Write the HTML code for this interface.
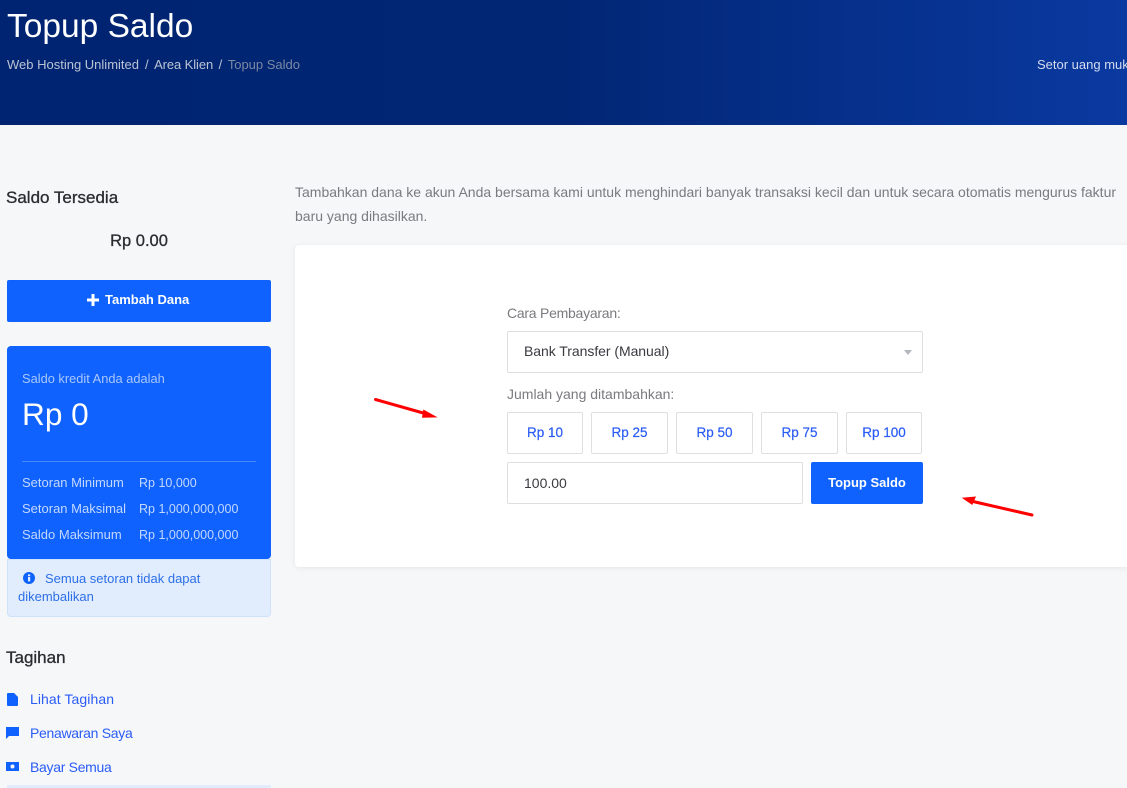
<!DOCTYPE html>
<html><head><meta charset="utf-8"><style>
html,body{margin:0;padding:0}
body{width:1127px;height:788px;overflow:hidden;position:relative;background:#f6f7f9;font-family:"Liberation Sans",sans-serif;font-size:14px;color:#7a7a80}
.a{position:absolute;white-space:nowrap}
.box{position:absolute;box-sizing:border-box;background:#fff;border:1px solid #dfdfe2;border-radius:2px}
.amt{top:412px;height:42px;text-align:center;line-height:40px;color:#2a5cf6;font-size:13.5px;-webkit-text-stroke:.2px #2a5cf6}
.side{left:30px;color:#2a5cf6;font-size:14px}
.h{font-size:17px;line-height:20px;color:#2b2b30;-webkit-text-stroke:.3px #2b2b30}
.l{font-size:13px;line-height:16px;color:#c3d8ff}
.v{font-size:12.5px;line-height:16px;color:#c3d8ff;left:139px}
</style></head><body>
<div class="a" style="left:0;top:0;width:1127px;height:125px;background:linear-gradient(90deg,#002471 0%,#012674 50%,#0a39a0 100%)"></div>
<div class="a" style="left:7px;top:7px;font-size:33.5px;line-height:40px;color:#fff">Topup Saldo</div>
<div class="a" style="left:7px;top:57px;line-height:16px;font-size:13px;color:#bcc3d4">Web Hosting Unlimited<span style="margin:0 5.500px 0 6px">/</span><span style="letter-spacing:-.1px">Area Klien</span><span style="margin:0 5.500px">/</span><span style="color:#7c88a4">Topup Saldo</span></div>
<div class="a" style="left:1037px;top:57px;line-height:16px;font-size:13px;color:#d5dcf0">Setor uang muka</div>

<div class="a h" style="left:6px;top:188px">Saldo Tersedia</div>
<div class="a" style="left:7px;width:264px;top:231px;text-align:center;font-size:16.5px;line-height:20px;color:#2b2b30;-webkit-text-stroke:.3px #2b2b30">Rp 0.00</div>
<div class="a" style="left:7px;top:280px;width:264px;height:42px;background:#0f62fe;border-radius:2px"></div>
<svg class="a" style="left:87px;top:294px" width="12" height="12" viewBox="0 0 12 12"><path d="M4.500 0h3v4.500H12v3H7.500V12h-3V7.500H0v-3h4.500z" fill="#fff"/></svg>
<div class="a" style="left:105px;top:292px;color:#fff;font-weight:bold;font-size:13px;line-height:16px">Tambah Dana</div>

<div class="a" style="left:7px;top:559px;width:264px;height:58px;box-sizing:border-box;background:#e1edfd;border:1px solid #cfe2fb;border-radius:0 0 4px 4px"></div>
<div class="a" style="left:7px;top:346px;width:264px;height:213px;background:#0f62fe;border-radius:4px"></div>
<div class="a" style="left:22px;top:371px;font-size:12.85px;line-height:16px;color:#a9c6fe">Saldo kredit Anda adalah</div>
<div class="a" style="left:22px;top:394px;font-size:31.6px;line-height:40px;color:#fff">Rp 0</div>
<div class="a" style="left:22px;top:461px;width:234px;height:1px;background:#4a88fe"></div>
<div class="a l" style="left:22px;top:475px">Setoran Minimum</div>
<div class="a v" style="top:475px">Rp 10,000</div>
<div class="a l" style="left:22px;top:501px">Setoran Maksimal</div>
<div class="a v" style="top:501px">Rp 1,000,000,000</div>
<div class="a l" style="left:22px;top:527px">Saldo Maksimum</div>
<div class="a v" style="top:527px">Rp 1,000,000,000</div>
<svg class="a" style="left:23px;top:572px" width="12" height="12" viewBox="0 0 12 12"><circle cx="6" cy="6" r="6" fill="#0f62fe"/><rect x="5" y="5" width="2.2" height="4.400" fill="#e1edfd"/><rect x="5" y="2.400" width="2.2" height="1.800" fill="#e1edfd"/></svg>
<div class="a" style="left:45px;top:570px;font-size:13px;line-height:18px;color:#2c6fe8">Semua setoran tidak dapat</div>
<div class="a" style="left:18px;top:588px;font-size:13px;line-height:18px;color:#2c6fe8">dikembalikan</div>

<div class="a h" style="left:6px;top:648px">Tagihan</div>
<svg class="a" style="left:7px;top:693px" width="12" height="13" viewBox="0 0 12 13"><path d="M0 1a1 1 0 0 1 1-1h6l4 4v8a1 1 0 0 1-1 1H1a1 1 0 0 1-1-1z" fill="#0f62fe"/></svg>
<div class="a side" style="top:691px;line-height:16px;letter-spacing:.08px">Lihat Tagihan</div>
<svg class="a" style="left:6px;top:727px" width="13" height="12" viewBox="0 0 13 12"><path d="M0 0h13v9H3l-3 3z" fill="#0f62fe"/></svg>
<div class="a side" style="top:725px;line-height:16px;letter-spacing:-.3px">Penawaran Saya</div>
<svg class="a" style="left:6px;top:762px" width="13" height="9" viewBox="0 0 13 9"><path fill-rule="evenodd" d="M0 0h13v9H0zM6.500 2.500a2 2 0 1 0 0 4 2 2 0 0 0 0-4z" fill="#0f62fe"/></svg>
<div class="a side" style="top:759px;line-height:16px;letter-spacing:-.3px">Bayar Semua</div>
<div class="a" style="left:7px;top:785px;width:264px;height:3px;background:#e1edfd"></div>

<div class="a" style="left:295px;top:184px;font-size:14px;line-height:16px">Tambahkan dana ke akun Anda bersama kami untuk menghindari banyak transaksi kecil dan untuk secara otomatis mengurus faktur</div>
<div class="a" style="left:295px;top:208px;font-size:14px;line-height:16px">baru yang dihasilkan.</div>
<div class="a" style="left:295px;top:245px;width:840px;height:322px;background:#fff;border-radius:4px;box-shadow:0 1px 6px rgba(30,40,70,.08)"></div>

<div class="a" style="left:507px;top:305px;font-size:14px;line-height:16px;letter-spacing:-.25px">Cara Pembayaran:</div>
<div class="box" style="left:507px;top:331px;width:416px;height:42px"></div>
<div class="a" style="left:524px;top:343px;font-size:14px;line-height:16px;color:#3a3a40;letter-spacing:-.05px">Bank Transfer (Manual)</div>
<svg class="a" style="left:904px;top:350px" width="8" height="5" viewBox="0 0 8 5"><path d="M0 0h8L4 5z" fill="#b4b6bd"/></svg>
<div class="a" style="left:507px;top:386px;font-size:14px;line-height:16px">Jumlah yang ditambahkan:</div>
<div class="box amt" style="left:507px;width:76px">Rp 10</div>
<div class="box amt" style="left:591px;width:77px">Rp 25</div>
<div class="box amt" style="left:676px;width:77px">Rp 50</div>
<div class="box amt" style="left:761px;width:77px">Rp 75</div>
<div class="box amt" style="left:846px;width:76px">Rp 100</div>
<div class="box" style="left:507px;top:462px;width:296px;height:42px"></div>
<div class="a" style="left:524px;top:475px;font-size:14px;line-height:16px;color:#3a3a40">100.00</div>
<div class="a" style="left:811px;top:462px;width:112px;height:42px;background:#0f62fe;border-radius:2px;color:#fff;font-weight:bold;font-size:13px;line-height:41px;text-align:center">Topup Saldo</div>

<svg class="a" style="left:0;top:0;pointer-events:none" width="1127" height="788">
<path d="M375.500 399.500L425 413.500" stroke="#f00" stroke-width="3" stroke-linecap="round"/>
<path d="M437.700 417.400L423.300 409.500L422 417.800z" fill="#f00"/>
<path d="M1032 515L973 501.500" stroke="#f00" stroke-width="3" stroke-linecap="round"/>
<path d="M961.700 497.700L976 496.500L972.300 505z" fill="#f00"/>
</svg>
</body></html>
